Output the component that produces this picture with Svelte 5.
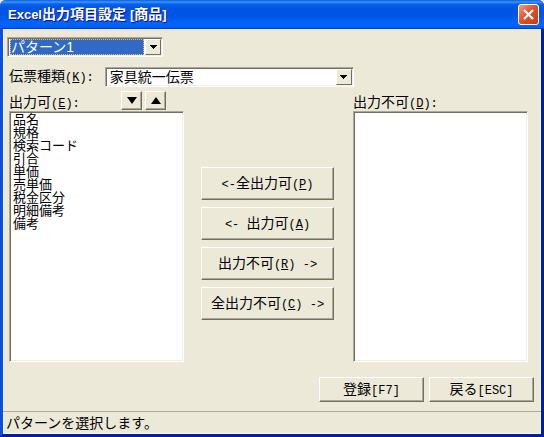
<script lang="ts">
	type Action = { left?: string; text: string; key: string; right?: string };

	let pattern = $state('パターン1');
	let slip = $state('家具統一伝票');
	let enabled = $state(['品名', '規格', '検索コード', '引合', '単価', '売単価', '税金区分', '明細備考', '備考']);
	let disabled = $state<string[]>([]);
	let picked = $state<string[]>([]);
	let pickedOff = $state<string[]>([]);

	let patternBox: HTMLSelectElement;
	let slipBox: HTMLSelectElement;

	const actions: Action[] = [
		{ left: '<-', text: '全出力可', key: 'P' },
		{ left: '<- ', text: '出力可', key: 'A' },
		{ text: '出力不可', key: 'R', right: ' ->' },
		{ text: '全出力不可', key: 'C', right: ' ->' }
	];

	function run(key: string) {
		const toOn = key === 'P' ? disabled : key === 'A' ? pickedOff : [];
		const toOff = key === 'C' ? enabled : key === 'R' ? picked : [];
		const on = [...enabled.filter((n) => !toOff.includes(n)), ...toOn];
		const off = [...disabled.filter((n) => !toOn.includes(n)), ...toOff];
		enabled = on;
		disabled = off;
		picked = [];
		pickedOff = [];
	}

	function shift(step: number) {
		const from = enabled.indexOf(picked[0]);
		const to = from + step;
		if (from < 0 || to < 0 || to >= enabled.length) return;
		const next = [...enabled];
		[next[from], next[to]] = [next[to], next[from]];
		enabled = next;
	}
</script>

{#snippet arrow()}
	<svg width="7" height="4" viewBox="0 0 7 4" shape-rendering="crispEdges" aria-hidden="true">
		<path d="M0 0h7v1H6v1H5v1H4v1H3V3H2V2H1V1H0z" />
	</svg>
{/snippet}

<div class="window">
	<header class="titlebar">
		<h1><span class="latin">Excel</span>出力項目設定 <span class="latin">[</span>商品<span class="latin">]</span></h1>
		<button class="close" aria-label="閉じる">
			<svg width="13" height="13" viewBox="0 0 13 13" aria-hidden="true">
				<path d="M2 2l9 9M11 2l-9 9" stroke="#fff" stroke-width="2.2" />
			</svg>
		</button>
	</header>

	<main class="client">
		<div class="pattern">
			<div class="combo active">
				<select aria-label="パターン" bind:this={patternBox} bind:value={pattern}>
					<option>パターン1</option>
					<option>パターン2</option>
				</select>
				<button class="drop" tabindex="-1" aria-label="開く" onclick={() => patternBox.showPicker()}>
					{@render arrow()}
				</button>
			</div>
		</div>

		<div class="slip">
			<label for="slip">伝票種類<span class="mono">(<u>K</u>):</span></label>
			<div class="combo">
				<select id="slip" bind:this={slipBox} bind:value={slip}>
					<option>家具統一伝票</option>
				</select>
				<button class="drop" tabindex="-1" aria-label="開く" onclick={() => slipBox.showPicker()}>
					{@render arrow()}
				</button>
			</div>
		</div>

		<div class="lists">
			<div class="column">
				<div class="caption">
					<label for="enabled">出力可<span class="mono">(<u>E</u>):</span></label>
					<div class="order">
						<button class="raised" aria-label="下へ" onclick={() => shift(1)}>
							<svg width="10" height="7" viewBox="0 0 10 7" aria-hidden="true"><path d="M0 0h10L5 7z" /></svg>
						</button>
						<button class="raised" aria-label="上へ" onclick={() => shift(-1)}>
							<svg width="10" height="7" viewBox="0 0 10 7" aria-hidden="true"><path d="M0 7h10L5 0z" /></svg>
						</button>
					</div>
				</div>
				<select id="enabled" class="listbox" multiple bind:value={picked}>
					{#each enabled as name}
						<option>{name}</option>
					{/each}
				</select>
			</div>

			<div class="actions">
				{#each actions as a}
					<button class="raised" onclick={() => run(a.key)}>
						<span class="mono">{a.left ?? ''}</span>{a.text}<span class="mono">(<u>{a.key}</u>){a.right ?? ''}</span>
					</button>
				{/each}
			</div>

			<div class="column">
				<div class="caption">
					<label for="disabled">出力不可<span class="mono">(<u>D</u>):</span></label>
				</div>
				<select id="disabled" class="listbox" multiple bind:value={pickedOff}>
					{#each disabled as name}
						<option>{name}</option>
					{/each}
				</select>
			</div>
		</div>

		<div class="commands">
			<button class="raised">登録<span class="mono">[F7]</span></button>
			<button class="raised">戻る<span class="mono">[ESC]</span></button>
		</div>
	</main>

	<footer class="status">パターンを選択します。</footer>
</div>

<style>
	:global(body) {
		background: #ece9d8;
	}

	.window {
		box-sizing: border-box;
		border: 3px solid #0831d9;
		border-top: 0;
		border-left-color: #0a4fe4;
		border-right-color: #001ea0;
		border-bottom-color: #001ea0;
		border-radius: 6px 6px 0 0;
		background: #ece9d8;
		color: #000;
		font: 14px/16px 'Liberation Sans', 'Noto Sans CJK JP', sans-serif;
	}

	button,
	select {
		margin: 0;
		padding: 0;
		border-radius: 0;
		color: #000;
		font: inherit;
	}

	.mono {
		font-family: 'Liberation Mono', monospace;
		font-size: 12px;
		white-space: pre;
	}

	.titlebar {
		display: flex;
		align-items: center;
		justify-content: space-between;
		height: 29px;
		margin: 0 -3px;
		padding: 1px 5px 0 8px;
		box-sizing: border-box;
		border-bottom: 1px solid #0341c4;
		border-radius: 6px 6px 0 0;
		background: linear-gradient(#0a5be0 0, #3d95ff 2px, #0a62ea 4px, #0054e3 8px, #0055e5 16px, #0066ff 24px, #005bf0 28px);
	}

	h1 {
		margin: 0;
		color: #fff;
		font-size: 14px;
		line-height: 16px;
		font-weight: bold;
		text-shadow: 1px 1px #0f1089;
	}

	.latin {
		font-size: 13px;
	}

	.close {
		display: grid;
		place-items: center;
		width: 21px;
		height: 21px;
		border: 1px solid #fff;
		border-radius: 3px;
		background: linear-gradient(135deg, #f0a088, #e0532e 45%, #c83a12);
	}

	.client {
		padding: 8px 4px 9px;
		box-shadow: inset 1px 0 #f7f6f0, inset -1px 0 #f7f6f0;
	}

	.combo {
		display: flex;
		box-sizing: border-box;
		height: 20px;
		border: 1px solid;
		border-color: #aca899 #fff #fff #aca899;
		box-shadow: inset 1px 1px #716f64, inset -1px -1px #f1efe2;
		background: #fff;
		padding: 1px;
	}

	.combo select {
		flex: 1;
		min-width: 0;
		appearance: none;
		border: 1px solid #fff;
		outline: 0;
		background: #fff;
		padding: 0 2px;
		line-height: 14px;
	}

	.combo.active select {
		margin: 0 1px;
		border: 1px dotted #e0c080;
		background: #316ac5;
		color: #fff;
		padding: 0;
	}

	.drop {
		display: grid;
		place-items: center;
		width: 16px;
		border: 1px solid;
		border-color: #fff #716f64 #716f64 #fff;
		background: #ece9d8;
	}

	.pattern .combo {
		width: 156px;
	}

	.slip {
		display: flex;
		align-items: center;
		gap: 11px;
		margin-top: 10px;
		padding-left: 2px;
	}

	.slip .combo {
		flex: 0 1 249px;
	}

	.lists {
		display: grid;
		grid-template-columns: 1fr 135px 1fr;
		column-gap: 17px;
		margin-top: 3px;
		padding: 0 9px 0 2px;
	}

	.caption {
		display: flex;
		align-items: center;
		justify-content: space-between;
		height: 21px;
		padding-right: 18px;
	}

	.caption label {
		padding-top: 5px;
	}

	.order {
		display: flex;
		gap: 3px;
	}

	.raised {
		border: 1px solid;
		border-color: #fff #716f64 #716f64 #fff;
		box-shadow: inset -1px -1px #aca899;
		background: #ece9d8;
		white-space: nowrap;
	}

	.order .raised {
		display: grid;
		place-items: center;
		width: 21px;
		height: 19px;
	}

	.listbox {
		display: block;
		box-sizing: border-box;
		width: 100%;
		height: 251px;
		border: 1px solid;
		border-color: #aca899 #fff #fff #aca899;
		box-shadow: inset 1px 1px #716f64, inset -1px -1px #f1efe2;
		outline: 0;
		background: #fff;
		padding: 0 2px;
		overflow-y: auto;
	}

	.listbox option {
		display: flex;
		align-items: center;
		min-height: 0;
		height: 13px;
		padding: 0 1px;
		font-size: 13px;
		line-height: 13px;
	}

	.actions {
		display: flex;
		flex-direction: column;
		gap: 7px;
		padding: 77px 2px 0 0;
	}

	.actions .raised {
		height: 33px;
	}

	.commands {
		display: flex;
		justify-content: flex-end;
		gap: 5px;
		margin-top: 15px;
		padding-right: 3px;
	}

	.commands .raised {
		width: 105px;
		height: 25px;
	}

	.status {
		border-top: 1px solid #aca899;
		box-shadow: inset 1px 0 #f7f6f0, inset -1px -1px #f7f6f0;
		padding: 3px;
	}
</style>
